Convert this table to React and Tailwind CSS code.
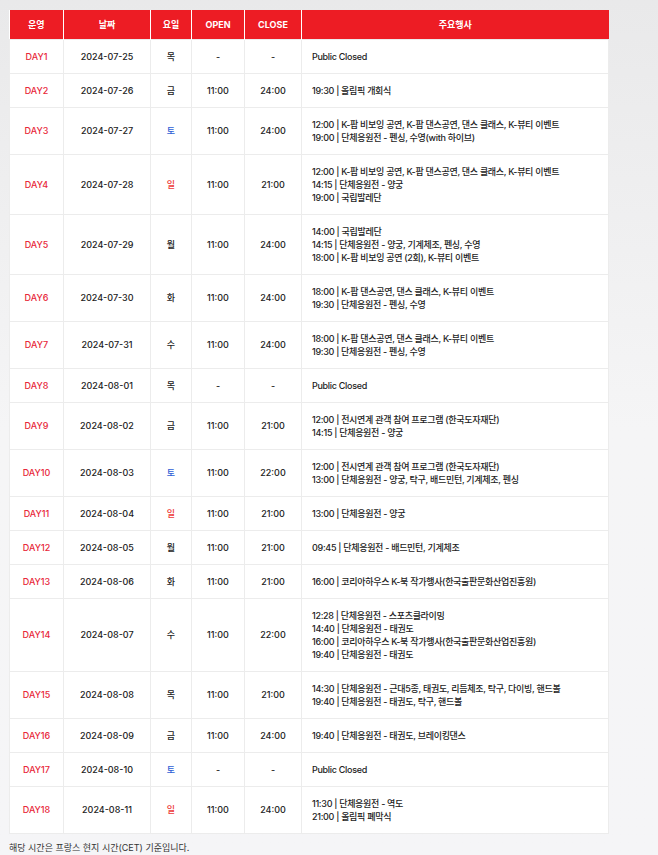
import React from 'react';

const rows = [
  { day: 'DAY1', date: '2024-07-25', dow: '목', open: '-', close: '-', events: [['', 'Public Closed']] },
  { day: 'DAY2', date: '2024-07-26', dow: '금', open: '11:00', close: '24:00', events: [['19:30', '올림픽 개회식']] },
  { day: 'DAY3', date: '2024-07-27', dow: '토', open: '11:00', close: '24:00', events: [['12:00', 'K-팝 비보잉 공연, K-팝 댄스공연, 댄스 클래스, K-뷰티 이벤트'], ['19:00', '단체응원전 - 펜싱, 수영(with 하이브)']] },
  { day: 'DAY4', date: '2024-07-28', dow: '일', open: '11:00', close: '21:00', events: [['12:00', 'K-팝 비보잉 공연, K-팝 댄스공연, 댄스 클래스, K-뷰티 이벤트'], ['14:15', '단체응원전 - 양궁'], ['19:00', '국립발레단']] },
  { day: 'DAY5', date: '2024-07-29', dow: '월', open: '11:00', close: '24:00', events: [['14:00', '국립발레단'], ['14:15', '단체응원전 - 양궁, 기계체조, 펜싱, 수영'], ['18:00', 'K-팝 비보잉 공연 (2회), K-뷰티 이벤트']] },
  { day: 'DAY6', date: '2024-07-30', dow: '화', open: '11:00', close: '24:00', events: [['18:00', 'K-팝 댄스공연, 댄스 클래스, K-뷰티 이벤트'], ['19:30', '단체응원전 - 펜싱, 수영']] },
  { day: 'DAY7', date: '2024-07-31', dow: '수', open: '11:00', close: '24:00', events: [['18:00', 'K-팝 댄스공연, 댄스 클래스, K-뷰티 이벤트'], ['19:30', '단체응원전 - 펜싱, 수영']] },
  { day: 'DAY8', date: '2024-08-01', dow: '목', open: '-', close: '-', events: [['', 'Public Closed']] },
  { day: 'DAY9', date: '2024-08-02', dow: '금', open: '11:00', close: '21:00', events: [['12:00', '전시연계 관객 참여 프로그램 (한국도자재단)'], ['14:15', '단체응원전 - 양궁']] },
  { day: 'DAY10', date: '2024-08-03', dow: '토', open: '11:00', close: '22:00', events: [['12:00', '전시연계 관객 참여 프로그램 (한국도자재단)'], ['13:00', '단체응원전 - 양궁, 탁구, 배드민턴, 기계체조, 펜싱']] },
  { day: 'DAY11', date: '2024-08-04', dow: '일', open: '11:00', close: '21:00', events: [['13:00', '단체응원전 - 양궁']] },
  { day: 'DAY12', date: '2024-08-05', dow: '월', open: '11:00', close: '21:00', events: [['09:45', '단체응원전 - 배드민턴, 기계체조']] },
  { day: 'DAY13', date: '2024-08-06', dow: '화', open: '11:00', close: '21:00', events: [['16:00', '코리아하우스 K-북 작가행사(한국출판문화산업진흥원)']] },
  { day: 'DAY14', date: '2024-08-07', dow: '수', open: '11:00', close: '22:00', events: [['12:28', '단체응원전 - 스포츠클라이밍'], ['14:40', '단체응원전 - 태권도'], ['16:00', '코리아하우스 K-북 작가행사(한국출판문화산업진흥원)'], ['19:40', '단체응원전 - 태권도']] },
  { day: 'DAY15', date: '2024-08-08', dow: '목', open: '11:00', close: '21:00', events: [['14:30', '단체응원전 - 근대5종, 태권도, 리듬체조, 탁구, 다이빙, 핸드볼'], ['19:40', '단체응원전 - 태권도, 탁구, 핸드볼']] },
  { day: 'DAY16', date: '2024-08-09', dow: '금', open: '11:00', close: '24:00', events: [['19:40', '단체응원전 - 태권도, 브레이킹댄스']] },
  { day: 'DAY17', date: '2024-08-10', dow: '토', open: '-', close: '-', events: [['', 'Public Closed']] },
  { day: 'DAY18', date: '2024-08-11', dow: '일', open: '11:00', close: '24:00', events: [['11:30', '단체응원전 - 역도'], ['21:00', '올림픽 폐막식']] },
];

function dowColor(dow) {
  if (dow === '토') return 'text-[#2f5fd6]';
  if (dow === '일') return 'text-[#ee3a3a]';
  return 'text-[#222]';
}

export default function App() {
  const cell = 'border border-[#ececec] text-center align-middle py-[10px]';

  return (
    <div
      className="min-h-[855px] w-[658px] bg-gradient-to-b from-[#e9e9ea] via-[#f5f5f6] to-[#f5f5f7] pt-[10px] pl-[9px] text-[9px] leading-[13px] text-[#222]"
      style={{ fontFamily: 'Inter, "Noto Sans CJK KR", sans-serif' }}
    >
      <table className="w-[599px] table-fixed border-collapse bg-white">
        <colgroup>
          <col className="w-[54px]" />
          <col className="w-[87px]" />
          <col className="w-[41px]" />
          <col className="w-[53px]" />
          <col className="w-[57px]" />
          <col className="w-[307px]" />
        </colgroup>
        <thead>
          <tr className="h-[29px] bg-[#ed1c24] font-semibold text-white">
            <th className="border-r border-white">운영</th>
            <th className="border-r border-white">날짜</th>
            <th className="border-r border-white">요일</th>
            <th className="border-r border-white">OPEN</th>
            <th className="border-r border-white">CLOSE</th>
            <th>주요행사</th>
          </tr>
        </thead>
        <tbody className="font-medium">
          {rows.map((r) => (
            <tr key={r.day}>
              <td className={`${cell} text-[#e8283a]`}>{r.day}</td>
              <td className={cell}>{r.date}</td>
              <td className={`${cell} ${dowColor(r.dow)}`}>{r.dow}</td>
              <td className={cell}>{r.open}</td>
              <td className={cell}>{r.close}</td>
              <td className="border border-[#ececec] py-[10px] pl-[10px] text-left align-middle tracking-[-0.3px]">
                {r.events.map(([time, text], i) => (
                  <div key={i}>
                    {time ? `${time} | ${text}` : text}
                  </div>
                ))}
              </td>
            </tr>
          ))}
        </tbody>
      </table>
      <p className="mt-[7px] text-[#333]">해당 시간은 프랑스 현지 시간(CET) 기준입니다.</p>
    </div>
  );
}
